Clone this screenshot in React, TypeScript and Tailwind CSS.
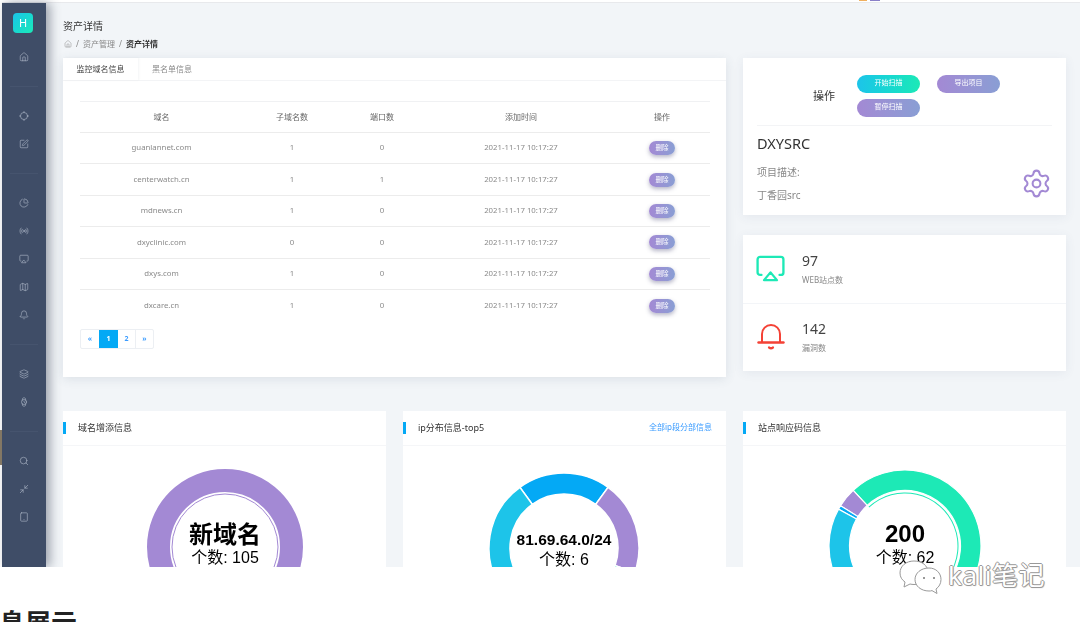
import {
  Airplay,
  House,
  Layers,
  Map,
  Minimize2,
  PieChart,
  Radio,
  Search,
  Settings,
  SquarePen,
  Tablet,
  Watch,
  Bell as BellLine,
} from "lucide-react";

const sans = "font-['Noto_Sans','Noto_Sans_CJK_SC',sans-serif]";
const arial = "'Liberation Sans','Noto Sans CJK SC',sans-serif";

function Chip({ size, strokeWidth }: { size: number; strokeWidth: number }) {
  return (
    <svg width={size} height={size} viewBox="0 0 24 24" fill="none" stroke="currentColor" strokeWidth={strokeWidth} strokeLinecap="round">
      <circle cx="12" cy="12" r="8.500" />
      <path d="M12 1v2.500M12 20.500V23M1 12h2.500M20.500 12H23" />
    </svg>
  );
}

const sideGroups = [
  [House],
  [Chip, SquarePen],
  [PieChart, Radio, Airplay, Map, BellLine],
  [Layers, Watch],
  [Search, Minimize2, Tablet],
];

const rows = [
  ["guanlannet.com", "1", "0"],
  ["centerwatch.cn", "1", "1"],
  ["mdnews.cn", "1", "0"],
  ["dxyclinic.com", "0", "0"],
  ["dxys.com", "1", "0"],
  ["dxcare.cn", "1", "0"],
];

const tableCols = "grid grid-cols-[163px_98px_82px_196px_91px] items-center text-center";

// angles are degrees clockwise from 12 o'clock
function arc(cx: number, cy: number, outer: number, inner: number, from: number, to: number) {
  const pt = (r: number, a: number) => {
    const t = ((a - 90) * Math.PI) / 180;
    return `${(cx + r * Math.cos(t)).toFixed(2)} ${(cy + r * Math.sin(t)).toFixed(2)}`;
  };
  const large = to - from > 180 ? 1 : 0;
  return `M${pt(outer, from)} A${outer} ${outer} 0 ${large} 1 ${pt(outer, to)} L${pt(inner, to)} A${inner} ${inner} 0 ${large} 0 ${pt(inner, from)} Z`;
}

function Sidebar() {
  return (
    <div className="relative z-10 flex w-[44px] shrink-0 flex-col items-center bg-[#3f4d67] pt-[10px] shadow-[4px_0_10px_rgba(50,60,80,0.45)]">
      <div className="mr-[2px] flex h-[20px] w-[20px] items-center justify-center rounded-[4px] bg-gradient-to-br from-[#1dc4e9] to-[#1de9b6] text-[11px] text-white">
        H
      </div>
      <div className="mt-[10px] flex w-full flex-col items-center">
        {sideGroups.map((group, i) => (
          <div key={i} className="flex w-full flex-col items-center">
            {i > 0 && <div className="my-[15px] h-px w-[28px] bg-[#46546e]" />}
            <div className="flex flex-col items-center">
              {group.map((Icon, j) => (
                <div key={j} className="flex h-[28px] items-center justify-center text-[#aeb7c7]">
                  <Icon size={10} strokeWidth={1.5} />
                </div>
              ))}
            </div>
          </div>
        ))}
      </div>
    </div>
  );
}

function DomainCard() {
  return (
    <div className="h-[319px] bg-white shadow-[0_2px_10px_rgba(60,80,110,0.12)]">
      <div className="flex h-[23px] border-b border-[#f3f4f6] text-[8px]">
        <div className="flex w-[75px] items-center justify-center text-[#444] shadow-[1px_0_2px_rgba(60,80,110,0.06)]">
          监控域名信息
        </div>
        <div className="ml-[14px] flex items-center text-[#8a8a8a]">黑名单信息</div>
      </div>
      <div className="mx-[17px] mt-[20px] w-[630px] border-t border-[#f0f1f3] text-[7.800px] text-[#8a8a8a]">
        <div className={`${tableCols} h-[31px] border-b border-[#ececec] text-[8px] text-[#666]`}>
          <div>域名</div>
          <div>子域名数</div>
          <div>端口数</div>
          <div>添加时间</div>
          <div className="pr-[5px]">操作</div>
        </div>
        {rows.map((row, i) => (
          <div key={row[0]} className={`${tableCols} h-[31.400px] ${i < rows.length - 1 ? "border-b border-[#ececec]" : ""}`}>
            <div>{row[0]}</div>
            <div>{row[1]}</div>
            <div>{row[2]}</div>
            <div>2021-11-17 10:17:27</div>
            <div className="flex justify-center pr-[5px]">
              <span className="flex h-[14px] w-[26px] items-center justify-center rounded-full bg-gradient-to-r from-[#a389d4] to-[#899ed4] text-[6.500px] text-white shadow-[0_2px_4px_rgba(90,90,130,0.45)]">
                删除
              </span>
            </div>
          </div>
        ))}
        <div className="mt-[8px] flex h-[20px] w-[74px] rounded-[2px] border border-[#eceff3] text-[7px] font-bold text-[#3b9cff]">
          <span className="flex w-[18px] items-center justify-center">«</span>
          <span className="flex w-[19px] items-center justify-center bg-[#04a9f5] text-white">1</span>
          <span className="flex w-[18px] items-center justify-center border-r border-[#eceff3]">2</span>
          <span className="flex w-[17px] items-center justify-center">»</span>
        </div>
      </div>
    </div>
  );
}

function ActionCard() {
  return (
    <div className="relative h-[157px] bg-white px-[14px] shadow-[0_2px_10px_rgba(60,80,110,0.08)]">
      <div className="flex h-[68px] items-center border-b border-[#f3f4f6] pl-[56px]">
        <div className="mt-[10px] text-[11px] text-[#333]">操作</div>
        <div className="ml-[22px] mt-[8px] grid grid-cols-[63px_63px] gap-x-[17px] gap-y-[6px] text-[7px] text-white">
          <span className="flex h-[18px] items-center justify-center rounded-full bg-gradient-to-r from-[#1dc4e9] to-[#1de9b6]">开始扫描</span>
          <span className="flex h-[18px] items-center justify-center rounded-full bg-gradient-to-r from-[#a389d4] to-[#899ed4]">导出项目</span>
          <span className="flex h-[18px] items-center justify-center rounded-full bg-gradient-to-r from-[#a389d4] to-[#899ed4]">暂停扫描</span>
        </div>
      </div>
      <div className="mt-[7px] text-[14.500px] leading-[20px] text-[#333]">DXYSRC</div>
      <div className="mt-[12px] text-[10px] leading-[14px] text-[#888]">项目描述:</div>
      <div className="mt-[9px] text-[10px] leading-[14px] text-[#888]">丁香园src</div>
      <Settings size={31} strokeWidth={1.6} className="absolute right-[14px] top-[110px] text-[#a389d4]" />
    </div>
  );
}

function AlarmBell() {
  return (
    <svg width="28" height="30" viewBox="0 0 28 30" fill="none" stroke="#f44236" strokeWidth="2" strokeLinecap="round" strokeLinejoin="round">
      <path d="M5 20V12a9 9 0 0 1 18 0v8" />
      <path d="M1.500 20.500h25" strokeWidth="2.400" />
      <path d="M12 25.500q2 1.500 4 0" strokeWidth="2.200" />
    </svg>
  );
}

function StatRow({ icon, value, label }: { icon: React.ReactNode; value: string; label: string }) {
  return (
    <div className="flex flex-1 items-center pl-[14px]">
      <div className="flex w-[45px] shrink-0">{icon}</div>
      <div className="mt-[-2px]">
        <div className="text-[14px] leading-[20px] text-[#444]">{value}</div>
        <div className="mt-[3px] text-[8px] leading-[11px] text-[#888]">{label}</div>
      </div>
    </div>
  );
}

function ChartCard({ title, link, children }: { title: string; link?: string; children: React.ReactNode }) {
  return (
    <div className="h-[200px] overflow-hidden bg-white">
      <div className="relative flex h-[35px] items-center justify-between border-b border-[#f5f6f8] pl-[15px] pr-[14px]">
        <div className="absolute left-0 top-[11px] h-[12px] w-[3px] bg-[#04a9f5]" />
        <span className="text-[9px] text-[#333]">{title}</span>
        {link && <span className="mt-[-2px] text-[8px] text-[#3b9cff]">{link}</span>}
      </div>
      <svg width="323" height="165" viewBox="0 0 323 165">
        {children}
      </svg>
    </div>
  );
}

function ChartLabel({ x, y, size, bold, children }: { x: number; y: number; size: number; bold?: boolean; children: string }) {
  return (
    <text x={x} y={y} textAnchor="middle" fontSize={size} fontWeight={bold ? 700 : 400} fontFamily={arial} fill="#000">
      {children}
    </text>
  );
}

function Watermark() {
  return (
    <div className="absolute left-[896px] top-[558px] z-20 flex items-center">
      <svg width="50" height="36" viewBox="0 0 50 36" fill="#fff" stroke="#9a9a9a" strokeWidth="1">
        <path d="M18 3c-8 0-14 5-14 12 0 4 2 7 5 9l-1 5 6-3c1 .3 3 .5 4 .5 8 0 14-5 14-12S26 3 18 3z" />
        <path d="M33 10c-8 0-14 5-14 11.500S25 33 33 33c1 0 2 0 3-.4l5 2.900-1-4.500c3-2 5-5.500 5-9.500C45 15 40 10 33 10z" />
        <circle cx="28" cy="20" r="1" fill="#777" stroke="none" />
        <circle cx="38" cy="20" r="1" fill="#777" stroke="none" />
      </svg>
      <span className={`ml-[2px] mt-[-2px] text-[26px] leading-none tracking-[0.5px] text-white ${sans} [text-shadow:1px_0_0_#999,-1px_0_0_#999,0_1px_0_#999,0_-1px_0_#999,1px_1px_1px_#aaa]`}>
        kali笔记
      </span>
    </div>
  );
}

export default function App() {
  return (
    <div className={`relative h-[622px] w-[1080px] overflow-hidden bg-white ${sans}`}>
      <div className="flex h-[567px] overflow-hidden blur-[0.3px]">
        <div className="w-[2px] shrink-0 pt-[430px]">
          <div className="h-[35px] bg-[#8b7d66]" />
        </div>
        <div className="flex min-w-0 flex-1 flex-col">
          <div className="flex h-[3px] shrink-0 justify-end gap-[3px] border-b border-[#e8e9ec] bg-white pr-[200px]">
            <div className="h-[1px] w-[8px] bg-[#f0b060]" />
            <div className="h-[1px] w-[10px] bg-[#8a80c8]" />
          </div>
          <div className="flex min-h-0 flex-1">
            <Sidebar />
            <main className="min-w-0 flex-1 bg-[#f2f5f8] pl-[17px]">
              <div className="pt-[16px] text-[10px] leading-[14px] text-[#333]">资产详情</div>
              <div className="mt-[5px] flex h-[12px] items-center gap-[4px] pl-[1px] text-[8px] text-[#888]">
                <House size={8} strokeWidth={1.4} />
                <span>/</span>
                <span>资产管理</span>
                <span>/</span>
                <span className="font-semibold text-[#333]">资产详情</span>
              </div>
              <div className="mt-[8px] grid grid-cols-[663px_323px] gap-x-[17px]">
                <DomainCard />
                <div className="flex flex-col gap-[20px]">
                  <ActionCard />
                  <div className="flex h-[136px] flex-col bg-white shadow-[0_2px_10px_rgba(60,80,110,0.08)]">
                    <StatRow
                      icon={<Airplay size={31} strokeWidth={1.8} className="ml-[-2px] text-[#1de9b6]" />}
                      value="97"
                      label="WEB站点数"
                    />
                    <div className="h-px bg-[#f3f5f8]" />
                    <StatRow icon={<AlarmBell />} value="142" label="漏洞数" />
                  </div>
                </div>
              </div>
              <div className="mt-[34px] grid grid-cols-[323px_323px_323px] gap-x-[17px]">
                <ChartCard title="域名增添信息">
                  <circle cx="162" cy="101" r="66.500" fill="none" stroke="#a389d4" strokeWidth="23" />
                  <circle cx="162" cy="101" r="53" fill="none" stroke="#a389d4" strokeWidth="1" />
                  <ChartLabel x={162} y={97} size={24} bold>新域名</ChartLabel>
                  <ChartLabel x={162} y={117} size={16}>个数: 105</ChartLabel>
                </ChartCard>
                <ChartCard title="ip分布信息-top5" link="全部ip段分部信息">
                  <g stroke="#fff" strokeWidth="1.500">
                    <path d={arc(161, 102, 75, 54, -36, 36)} fill="#04a9f5" />
                    <path d={arc(161, 102, 75, 54, 36, 109)} fill="#a389d4" />
                    <path d={arc(161, 102, 75, 54, 109, 180)} fill="#1de9b6" />
                    <path d={arc(161, 102, 75, 54, 180, 235)} fill="#899ed4" />
                    <path d={arc(161, 102, 75, 54, 235, 324)} fill="#1dc4e9" />
                  </g>
                  <ChartLabel x={161} y={99} size={15.5} bold>81.69.64.0/24</ChartLabel>
                  <ChartLabel x={161} y={119} size={16}>个数: 6</ChartLabel>
                </ChartCard>
                <ChartCard title="站点响应码信息">
                  <g stroke="#fff" strokeWidth="1.200">
                    <path d={arc(162, 100, 76, 55.500, -43, 180)} fill="#1de9b6" />
                    <path d={arc(162, 100, 76, 55.500, -58, -43)} fill="#a389d4" />
                    <path d={arc(162, 100, 76, 55.500, -61, -58)} fill="#04a9f5" />
                    <path d={arc(162, 100, 76, 55.500, -180, -61)} fill="#1dc4e9" />
                  </g>
                  <path d={arc(162, 100, 53.500, 52.500, -43, 180)} fill="#1de9b6" />
                  <ChartLabel x={162} y={96} size={24} bold>200</ChartLabel>
                  <ChartLabel x={162} y={117} size={16}>个数: 62</ChartLabel>
                </ChartCard>
              </div>
            </main>
          </div>
        </div>
      </div>
      <div className="ml-[-1px] pt-[43px] text-[26px] font-bold leading-none text-[#222]">息展示</div>
      <Watermark />
    </div>
  );
}
